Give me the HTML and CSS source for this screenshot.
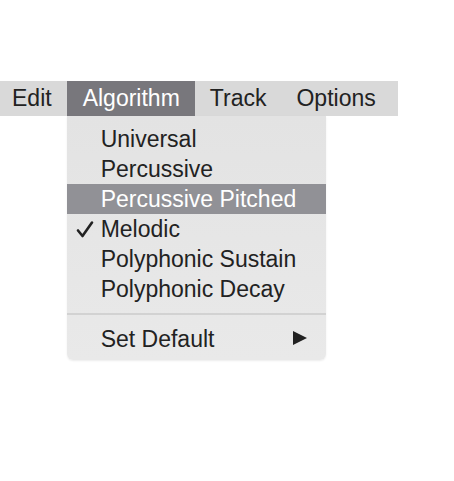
FILE: index.html
```html
<!DOCTYPE html>
<html>
<head>
<meta charset="utf-8">
<link rel="stylesheet" href="styles.css">
</head>
<body>
<div class="screen">
  <nav class="menubar">
    <span class="menu-title first">Edit</span>
    <div class="menu-group">
      <span class="menu-title active">Algorithm</span>
      <div class="dropdown">
        <div class="item">Universal</div>
        <div class="item">Percussive</div>
        <div class="item hover">Percussive Pitched</div>
        <div class="item checked"><svg class="check" width="18" height="18" viewBox="0 0 18 18"><path d="M2 10.5 L6.5 16 L16 2.5" fill="none" stroke="#222222" stroke-width="2.6" stroke-linecap="round" stroke-linejoin="round"/></svg>Melodic</div>
        <div class="item">Polyphonic Sustain</div>
        <div class="item">Polyphonic Decay</div>
        <div class="separator"></div>
        <div class="item submenu">Set Default<span class="arrow"></span></div>
      </div>
    </div>
    <span class="menu-title">Track</span>
    <span class="menu-title last">Options</span>
  </nav>
</div>
</body>
</html>
```
FILE: styles.css
```css
html, body {
  margin: 0;
  padding: 0;
  background: #ffffff;
}
body {
  font-family: "Liberation Sans", Arial, sans-serif;
  font-size: 23px;
  color: #222222;
}
.screen {
  width: 454px;
  height: 481px;
  padding-top: 81px;
  box-sizing: border-box;
}
.menubar {
  display: flex;
  width: 398px;
  height: 35px;
  background: #d9d9d9;
  align-items: stretch;
}
.menu-title {
  display: flex;
  align-items: center;
  padding: 0 15px;
  height: 35px;
  line-height: 35px;
}
.menu-title.first {
  padding-left: 12px;
}
.menu-title.active {
  background: #78777c;
  color: #ffffff;
  padding: 0 15px 0 16px;
}
.menu-group {
  position: relative;
  display: flex;
}
.dropdown {
  position: absolute;
  top: 35px;
  left: 0;
  width: 259px;
  padding: 8px 0 6px;
  background: linear-gradient(#e3e3e3, #e9e9e9);
  border-radius: 0 0 6px 6px;
  box-shadow: 0 1px 2px rgba(0,0,0,0.08);
}
.item {
  position: relative;
  height: 30px;
  line-height: 30px;
  padding-left: 34px;
  white-space: nowrap;
}
.item.hover {
  background: #919196;
  color: #ffffff;
}
.check {
  position: absolute;
  left: 9px;
  top: 6px;
}
.separator {
  height: 2px;
  background: #d2d2d2;
  margin: 9px 0 9px;
}
.submenu .arrow {
  position: absolute;
  left: 226px;
  top: 7px;
  width: 0;
  height: 0;
  border-top: 7.5px solid transparent;
  border-bottom: 7.5px solid transparent;
  border-left: 14px solid #222222;
}
```
